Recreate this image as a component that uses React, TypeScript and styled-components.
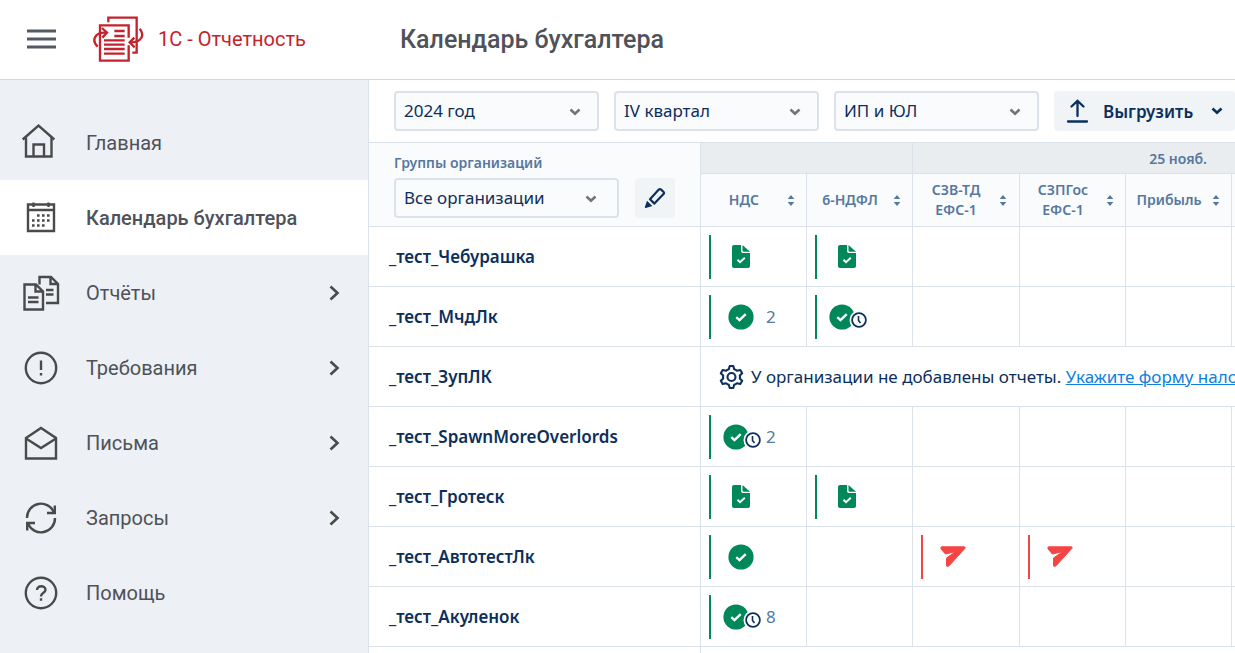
import React from "react";
import styled, { createGlobalStyle, css } from "styled-components";

const ui = '"Noto Sans", "Open Sans", sans-serif';
const line = "#dce2ea";
const navy = "#0c2f5c";
const slate = "#56789e";
const green = "#00875a";
const red = "#f44545";

const GlobalStyle = createGlobalStyle`
  *, *::before, *::after { box-sizing: border-box; }
  html, body { margin: 0; height: 100%; }
  body { background: #fff; font-family: Roboto, sans-serif; color: #4f5259; }
  button, select { font: inherit; margin: 0; cursor: pointer; }
  svg { display: block; flex: none; }
`;

const Page = styled.div`
  height: 100vh;
  display: flex;
  flex-direction: column;
  overflow: hidden;
`;

const Header = styled.header`
  flex: none;
  height: 80px;
  padding-bottom: 1px;
  display: flex;
  align-items: center;
  border-bottom: 1px solid #d3d8dd;
`;

const Brand = styled.div`
  flex: none;
  width: 400px;
  padding-left: 27px;
  display: flex;
  align-items: center;
`;

const MenuButton = styled.button`
  border: 0;
  padding: 0;
  background: none;
  color: #535a63;
`;

const BrandLink = styled.a`
  margin-left: 36px;
  display: flex;
  align-items: center;
  gap: 14px;
  color: #c4232d;
  font-size: 20px;
  text-decoration: none;
  white-space: nowrap;
`;

const Title = styled.h1`
  margin: 0;
  font-size: 25px;
  font-weight: 500;
  white-space: nowrap;
`;

const Body = styled.div`
  flex: 1;
  min-height: 0;
  display: flex;
`;

const Sidebar = styled.nav`
  flex: none;
  width: 369px;
  padding-top: 25px;
  background: #edf0f5;
  border-right: 1px solid ${line};
`;

const NavItem = styled.a<{ $active?: boolean }>`
  height: 75px;
  padding: 0 26px 0 20px;
  display: flex;
  align-items: center;
  gap: 26px;
  font-size: 20px;
  color: #4f5259;
  text-decoration: none;
  ${(p) => p.$active && css`
    background: #fff;
    font-weight: 500;
  `}
`;

const NavIcon = styled.span`
  width: 40px;
  display: flex;
  color: #4a4a4a;
`;

const NavLabel = styled.span`
  flex: 1;
  white-space: nowrap;
`;

const Main = styled.main`
  flex: 1;
  min-width: 0;
  overflow: hidden;
  font-family: ${ui};
  color: ${navy};
`;

const Toolbar = styled.div`
  height: 63px;
  padding: 11px 0 0 25px;
  display: flex;
  gap: 15px;
  border-bottom: 1px solid ${line};
`;

const SelectBox = styled.span<{ $width: number; $inset: number }>`
  position: relative;
  flex: none;
  width: ${(p) => p.$width}px;
  height: 40px;
  svg {
    position: absolute;
    right: ${(p) => p.$inset}px;
    top: 17px;
    color: #757575;
    pointer-events: none;
  }
`;

const Select = styled.select`
  width: 100%;
  height: 100%;
  padding: 0 30px 2px 8px;
  appearance: none;
  border: 2px solid ${line};
  border-radius: 4px;
  background: #fafbfd;
  color: ${navy};
  font-size: 17px;
`;

const ExportButton = styled.button`
  flex: none;
  height: 40px;
  padding: 0 12px;
  display: flex;
  align-items: center;
  border: 0;
  border-radius: 4px;
  background: #f0f4f7;
  color: ${navy};
  font-size: 17px;
  font-weight: 600;
  white-space: nowrap;
`;

const ExportLabel = styled.span`
  margin: 0 18px 0 14px;
`;

const Grid = styled.table`
  width: 1075px;
  table-layout: fixed;
  border-collapse: separate;
  border-spacing: 0;
  th, td {
    padding: 0;
    border-right: 1px solid ${line};
    border-bottom: 1px solid ${line};
  }
`;

const GroupsHead = styled.th`
  height: 84px;
  background: #f9fbfd;
  text-align: left;
`;

const GroupsBox = styled.div`
  height: 83px;
  padding: 10px 0 0 25px;
`;

const GroupsLabel = styled.label`
  display: block;
  height: 25px;
  font-size: 14px;
  font-weight: 600;
  line-height: 20px;
  color: ${slate};
`;

const GroupsControls = styled.div`
  display: flex;
  gap: 16px;
  font-weight: 400;
`;

const EditButton = styled.button`
  width: 40px;
  height: 40px;
  padding: 0;
  display: flex;
  align-items: center;
  justify-content: center;
  border: 0;
  border-radius: 4px;
  background: #f0f4f7;
  color: ${navy};
`;

const DateHead = styled.th`
  height: 31px;
  background: #e9edf0;
  color: ${slate};
  font-size: 14px;
  font-weight: 600;
`;

const FormHead = styled.th`
  height: 53px;
  background: #f9fbfd;
`;

const SortButton = styled.button`
  width: 100%;
  height: 52px;
  padding: 0;
  display: flex;
  align-items: center;
  border: 0;
  background: none;
  color: ${slate};
  font-size: 14px;
  font-weight: 600;
  line-height: 20px;
`;

const SortLabel = styled.span`
  width: 86px;
  white-space: pre;
`;

const OrgName = styled.th`
  height: 60px;
  text-align: left;
  font-size: 17px;
  font-weight: 600;
  a {
    padding-left: 20px;
    color: inherit;
    text-decoration: none;
  }
`;

const StatusCell = styled.td`
  height: 60px;
`;

const Status = styled.div<{ $late?: boolean }>`
  height: 44px;
  margin-left: 8px;
  padding-left: 8px;
  display: flex;
  align-items: center;
  border-left: 2px solid ${(p) => (p.$late ? red : green)};
`;

const StatusIcon = styled.span`
  width: 44px;
  display: flex;
  justify-content: center;
`;

const Count = styled.span`
  margin-left: 3px;
  font-size: 17px;
  line-height: 24px;
  color: ${slate};
`;

const Notice = styled.div`
  padding-left: 18px;
  display: flex;
  align-items: center;
  gap: 7px;
  font-size: 17px;
  white-space: nowrap;
  a { color: #0f80e0; }
`;

const LogoIcon = () => (
  <svg width="52" height="47" viewBox="21 33 156 141" fill="none" stroke="currentColor" strokeWidth="7">
    <path d="M70 52V38H155V143H142" />
    <path d="M131 98V61H45V167H131V121" />
    <path d="M88 78H119M88 93H119M57 106H119M57 119H119M57 132H119M57 146H119" />
    <path d="M38 125C18 106 30 80 64 83" />
    <path d="M51 69L66 83L52 98" />
    <path d="M164 71C180 90 170 113 135 112" />
    <path d="M148 98L134 112L149 127" />
  </svg>
);

const MenuIcon = () => (
  <svg width="29" height="20" viewBox="0 0 29 20" stroke="currentColor" strokeWidth="3">
    <path d="M0 2H29M0 10H29M0 18H29" />
  </svg>
);

const NavSvg = ({ children }: { children: React.ReactNode }) => (
  <svg width="40" height="40" viewBox="0 0 40 40" fill="none" stroke="currentColor" strokeWidth="2.4">
    {children}
  </svg>
);

const HomeIcon = () => (
  <NavSvg>
    <path d="M2.700 16.500L18.500 2.500L34.300 16.500" />
    <path d="M6 14.500V33.500H31.500V14.500M13.500 33V21.500H24V33" />
  </NavSvg>
);

const CalendarIcon = () => (
  <NavSvg>
    <path d="M8 6.500H34V33H8ZM8 12H34M13.500 4.500V9M28.500 4.500V9" />
    <path d="M17 17.500H31M12 22.500H31M12 27.500H26" strokeWidth="2.600" strokeDasharray="2.600 2.400" />
  </NavSvg>
);

const ReportsIcon = () => (
  <NavSvg>
    <path d="M4.500 11.500H16L23 18.500V36.500H4.500ZM15.500 11.500V18.500H23" />
    <path d="M8 24.500H18.500M8 29H18.500M26 17H33.500M26 21.500H33.500" />
    <path d="M19.500 11.500V4H31L38 11V30H26M30.500 4V11H38" />
  </NavSvg>
);

const AlertIcon = () => (
  <NavSvg>
    <circle cx="21" cy="20" r="15.200" />
    <path d="M21 12.500V22M21 25V27.500" />
  </NavSvg>
);

const MailIcon = () => (
  <NavSvg>
    <path d="M6 15L21 5L36 15V35.500H6Z" />
    <path d="M6 15.500L21 25L36 15.500" />
  </NavSvg>
);

const RefreshIcon = () => (
  <NavSvg>
    <path d="M7 20A14 14 0 0 1 34 14.500" />
    <path d="M35 20A14 14 0 0 1 8 25.500" />
    <path d="M34.800 7.500V15H27M7.200 32.500V25H15" />
  </NavSvg>
);

const HelpIcon = () => (
  <NavSvg>
    <circle cx="21" cy="20" r="15.200" />
    <path d="M17 17C17 12 25.500 12 25.500 16.800C25.500 20 21 19.500 21 23.500M21 25.300V27.800" />
  </NavSvg>
);

const ChevronRight = () => (
  <svg width="16" height="16" viewBox="0 0 16 16" fill="none" stroke="#4a4a4a" strokeWidth="2.600">
    <path d="M4.500 1.500L11.500 8L4.500 14.500" />
  </svg>
);

const ChevronDown = () => (
  <svg width="12" height="8" viewBox="0 0 12 8" fill="none" stroke="currentColor" strokeWidth="2.600">
    <path d="M1.500 1.500L6 5.800L10.500 1.500" />
  </svg>
);

const UploadIcon = () => (
  <svg width="23" height="24" viewBox="0 0 23 24" fill="none" stroke="currentColor" strokeWidth="2.300" strokeLinecap="round">
    <path d="M11.500 17V2.500M5.500 7.500L11.500 1.800L17.500 7.500" />
    <path d="M2 22.500H21" />
  </svg>
);

const PencilIcon = () => (
  <svg width="22" height="22" viewBox="0 0 22 22">
    <path d="M6 12.300L14.800 2.600Q15.900 1.500 17.100 2.600L19.400 4.800Q20.500 5.900 19.500 7.100L10.400 16.600Z" fill="none" stroke="currentColor" strokeWidth="2.200" strokeLinejoin="round" />
    <path d="M3 13.800L8.300 18.900L1.800 21Q.7 21.200 .9 20Z" fill="currentColor" />
  </svg>
);

const SortIcon = () => (
  <svg width="8" height="11" viewBox="0 0 8 11" fill="currentColor">
    <path d="M4 0L7.300 4H.7ZM4 11L7.300 7H.7Z" />
  </svg>
);

const DocIcon = () => (
  <svg width="18" height="23" viewBox="0 0 18 23" fill={green}>
    <path d="M2 0H9V6Q9 8 11 8H18V21Q18 23 16 23H2Q0 23 0 21V2Q0 0 2 0Z" />
    <path d="M10.500 0L18 6.700H12Q10.500 6.700 10.500 5.500Z" />
    <path d="M5.500 14.800L8 17.200L12.800 12.700" fill="none" stroke="#fff" strokeWidth="1.900" />
  </svg>
);

const DoneIcon = () => (
  <svg width="26" height="26" viewBox="0 0 26 26">
    <circle cx="13" cy="13" r="12.600" fill={green} />
    <path d="M8.300 13.200L11.500 16.200L17.700 10.200" fill="none" stroke="#fff" strokeWidth="2.400" />
  </svg>
);

const PendingIcon = () => (
  <svg width="40" height="26" viewBox="-2 0 40 26">
    <circle cx="13" cy="13" r="12.600" fill={green} />
    <path d="M8.300 13.200L11.500 16.200L17.700 10.200" fill="none" stroke="#fff" strokeWidth="2.400" />
    <circle cx="30" cy="16" r="9.500" fill="#fff" />
    <circle cx="30" cy="16" r="6.900" fill="none" stroke={navy} strokeWidth="1.800" />
    <path d="M29.500 12V16.500L31.500 19" fill="none" stroke={navy} strokeWidth="1.600" />
  </svg>
);

const SendIcon = () => (
  <svg width="26" height="21" viewBox="0 0 26 21" fill={red} stroke={red} strokeWidth="1" strokeLinejoin="round">
    <path d="M1.500 .8H24.500Q25.500 1.300 25 2.300L9.300 19.600Q8.800 20.200 8 20.200H7Q6.500 20.200 6.500 19.600V12L15.800 5.600L5.400 8L1 2.800Q.5 1.300 1.500 .8Z" />
  </svg>
);

const GearIcon = () => (
  <svg width="25" height="26" viewBox="0 0 25 26" fill="none" stroke={navy} strokeWidth="2.100" strokeLinejoin="round">
    <path d="M10.700 2H14.300L15.200 5.200Q16.800 5.700 18 6.800L21.300 6L23.200 9.200L20.800 11.600Q21.200 13 20.800 14.400L23.200 16.800L21.300 20L18 19.200Q16.800 20.300 15.200 20.800L14.300 24H10.700L9.800 20.800Q8.200 20.300 7 19.200L3.700 20L1.800 16.800L4.200 14.400Q3.800 13 4.200 11.600L1.800 9.200L3.700 6L7 6.800Q8.200 5.700 9.800 5.200Z" />
    <circle cx="12.500" cy="13" r="4" />
  </svg>
);

const nav = [
  { label: "Главная", icon: <HomeIcon /> },
  { label: "Календарь бухгалтера", icon: <CalendarIcon />, active: true },
  { label: "Отчёты", icon: <ReportsIcon />, nested: true },
  { label: "Требования", icon: <AlertIcon />, nested: true },
  { label: "Письма", icon: <MailIcon />, nested: true },
  { label: "Запросы", icon: <RefreshIcon />, nested: true },
  { label: "Помощь", icon: <HelpIcon /> },
];

const columns = ["НДС", "6-НДФЛ", "СЗВ-ТД\nЕФС-1", "СЗПГос\nЕФС-1", "Прибыль", "", ""];
const columnWidths = [106, 106, 107, 106, 106, 106, 106];

type Kind = "doc" | "done" | "pending" | "send";
type Cell = { kind: Kind; count?: number } | null;

const statusIcons: Record<Kind, React.ReactNode> = {
  doc: <DocIcon />,
  done: <DoneIcon />,
  pending: <PendingIcon />,
  send: <SendIcon />,
};

const rows: { name: string; cells?: Cell[] }[] = [
  { name: "_тест_Чебурашка", cells: [{ kind: "doc" }, { kind: "doc" }] },
  { name: "_тест_МчдЛк", cells: [{ kind: "done", count: 2 }, { kind: "pending" }] },
  { name: "_тест_ЗупЛК" },
  { name: "_тест_SpawnMoreOverlords", cells: [{ kind: "pending", count: 2 }] },
  { name: "_тест_Гротеск", cells: [{ kind: "doc" }, { kind: "doc" }] },
  { name: "_тест_АвтотестЛк", cells: [{ kind: "done" }, null, { kind: "send" }, { kind: "send" }] },
  { name: "_тест_Акуленок", cells: [{ kind: "pending", count: 8 }] },
];

function Dropdown({ id, label, value, width, inset }: { id: string; label?: string; value: string; width: number; inset: number }) {
  return (
    <SelectBox $width={width} $inset={inset}>
      <Select id={id} aria-label={label} defaultValue={value}>
        <option>{value}</option>
      </Select>
      <ChevronDown />
    </SelectBox>
  );
}

export default function App() {
  return (
    <Page>
      <GlobalStyle />
      <Header>
        <Brand>
          <MenuButton type="button" aria-label="Меню"><MenuIcon /></MenuButton>
          <BrandLink href="#home"><LogoIcon />1С - Отчетность</BrandLink>
        </Brand>
        <Title>Календарь бухгалтера</Title>
      </Header>
      <Body>
        <Sidebar>
          {nav.map((item) => (
            <NavItem key={item.label} href="#section" $active={item.active}>
              <NavIcon>{item.icon}</NavIcon>
              <NavLabel>{item.label}</NavLabel>
              {item.nested && <ChevronRight />}
            </NavItem>
          ))}
        </Sidebar>
        <Main>
          <Toolbar>
            <Dropdown id="year" label="Год" value="2024 год" width={205} inset={18} />
            <Dropdown id="quarter" label="Квартал" value="IV квартал" width={205} inset={18} />
            <Dropdown id="kind" label="Тип организации" value="ИП и ЮЛ" width={205} inset={18} />
            <ExportButton type="button">
              <UploadIcon />
              <ExportLabel>Выгрузить</ExportLabel>
              <ChevronDown />
            </ExportButton>
          </Toolbar>
          <Grid>
            <colgroup>
              <col width={332} />
              {columnWidths.map((w, i) => <col key={i} width={w} />)}
            </colgroup>
            <thead>
              <tr>
                <GroupsHead rowSpan={2}>
                  <GroupsBox>
                    <GroupsLabel htmlFor="groups">Группы организаций</GroupsLabel>
                    <GroupsControls>
                      <Dropdown id="groups" value="Все организации" width={225} inset={22} />
                      <EditButton type="button" aria-label="Изменить группы"><PencilIcon /></EditButton>
                    </GroupsControls>
                  </GroupsBox>
                </GroupsHead>
                <DateHead colSpan={2} />
                <DateHead colSpan={5}>25 нояб.</DateHead>
              </tr>
              <tr>
                {columns.map((name, i) => (
                  <FormHead key={i}>
                    {name && (
                      <SortButton type="button">
                        <SortLabel>{name}</SortLabel>
                        <SortIcon />
                      </SortButton>
                    )}
                  </FormHead>
                ))}
              </tr>
            </thead>
            <tbody>
              {rows.map((row) => (
                <tr key={row.name}>
                  <OrgName scope="row"><a href="#org">{row.name}</a></OrgName>
                  {row.cells ? (
                    columns.map((_, i) => {
                      const cell = row.cells?.[i];
                      return (
                        <StatusCell key={i}>
                          {cell && (
                            <Status $late={cell.kind === "send"}>
                              <StatusIcon>{statusIcons[cell.kind]}</StatusIcon>
                              {cell.count && <Count>{cell.count}</Count>}
                            </Status>
                          )}
                        </StatusCell>
                      );
                    })
                  ) : (
                    <StatusCell colSpan={7}>
                      <Notice>
                        <GearIcon />
                        <span>
                          У организации не добавлены отчеты. <a href="#tax">Укажите форму налогообложения</a>
                        </span>
                      </Notice>
                    </StatusCell>
                  )}
                </tr>
              ))}
              <tr>
                <OrgName />
                <StatusCell colSpan={7} />
              </tr>
            </tbody>
          </Grid>
        </Main>
      </Body>
    </Page>
  );
}
